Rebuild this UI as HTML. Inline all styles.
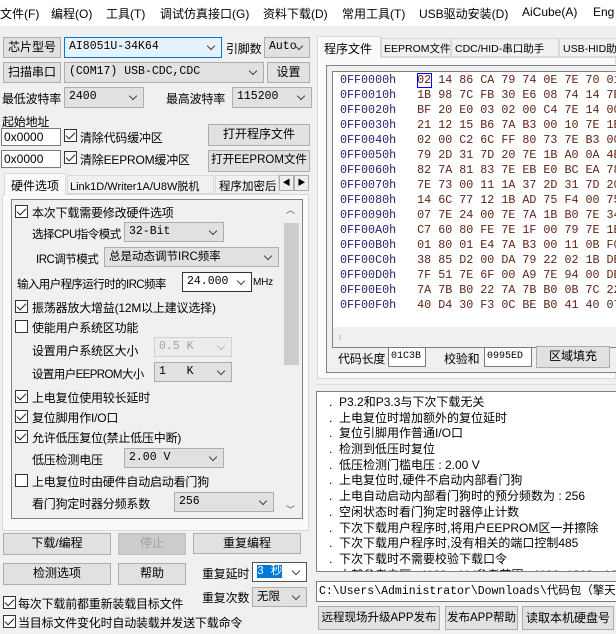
<!DOCTYPE html>
<html><head><meta charset="utf-8"><style>
*{box-sizing:border-box;margin:0;padding:0}
body{width:616px;height:634px;overflow:hidden;background:#f0f0f0;position:relative;font-family:"Liberation Sans","Noto Sans CJK SC",sans-serif;font-size:12px;color:#000}
.a{position:absolute;white-space:nowrap}
.menu{left:0;top:0;width:616px;height:26px;background:#fff}
.menu span{position:absolute;top:5px;font-size:12px}
.btn{position:absolute;background:#e1e1e1;border:1px solid #adadad;text-align:center;line-height:19px;font-size:12px;white-space:nowrap;overflow:hidden}
.cb{position:absolute;background:#e1e1e1;border:1px solid #adadad;font-family:"Liberation Mono","Noto Sans CJK SC",monospace;font-size:11.5px;padding-left:4px;line-height:18px;white-space:nowrap;overflow:hidden}
.cb:after{content:"";position:absolute;right:7px;top:5px;width:5px;height:5px;border-right:1px solid #444;border-bottom:1px solid #444;transform:rotate(45deg)}
.cbw{background:#fff;border-color:#7a7a7a}
.dis{color:#a0a0a0;background:#ececec;border-color:#d0d0d0}
.dis:after{border-color:#bbb}
.chk{position:absolute;width:13px;height:13px;border:1px solid #333;background:#fff}
.chk.on:after{content:"";position:absolute;left:3px;top:0px;width:4px;height:8px;border-right:1.5px solid #222;border-bottom:1.5px solid #222;transform:rotate(45deg)}
.lbl{position:absolute;white-space:nowrap;font-size:12px;letter-spacing:-0.2px}
.inp{position:absolute;background:#fff;border:1px solid #7a7a7a;font-family:"Liberation Sans",sans-serif;font-size:12px;padding-left:2px;line-height:16px}
.hex{position:absolute;font-family:"Liberation Mono",monospace;font-size:11.7px}
.hex div{white-space:pre;height:15px;line-height:15px}
.hex .ad{color:#23236e}
.hex .b{color:#5e2416}
.log div{height:15.7px;line-height:15.7px;font-size:12px;white-space:nowrap}
</style></head><body>
<div class="a menu">
<span style="left:0">文件(F)</span><span style="left:51px">编程(O)</span><span style="left:106px">工具(T)</span><span style="left:160px">调试仿真接口(G)</span><span style="left:263px">资料下载(D)</span><span style="left:342px">常用工具(T)</span><span style="left:419px">USB驱动安装(D)</span><span style="left:522px">AiCube(A)</span><span style="left:593px">Eng</span>
</div>

<div class="btn" style="left:3px;top:37px;width:58px;height:21px">芯片型号</div>
<div class="cb cbw" style="left:64px;top:37px;width:158px;height:21px;border-color:#0078d7;background:#e5f1fb">AI8051U-34K64</div>
<div class="lbl" style="left:226px;top:40px">引脚数</div>
<div class="cb" style="left:264px;top:37px;width:46px;height:21px">Auto</div>

<div class="btn" style="left:3px;top:62px;width:58px;height:21px">扫描串口</div>
<div class="cb" style="left:64px;top:62px;width:200px;height:21px">(COM17) USB-CDC,CDC</div>
<div class="btn" style="left:267px;top:62px;width:43px;height:21px">设置</div>

<div class="lbl" style="left:2px;top:90px">最低波特率</div>
<div class="cb" style="left:64px;top:87px;width:80px;height:21px">2400</div>
<div class="lbl" style="left:166px;top:90px">最高波特率</div>
<div class="cb" style="left:232px;top:87px;width:80px;height:21px">115200</div>

<div class="lbl" style="left:2px;top:113px">起始地址</div>
<div class="inp" style="left:1px;top:128px;width:60px;height:18px">0x0000</div>
<div class="chk on" style="left:64px;top:129px"></div>
<div class="lbl" style="left:80px;top:129px">清除代码缓冲区</div>
<div class="btn" style="left:208px;top:124px;width:102px;height:22px">打开程序文件</div>
<div class="inp" style="left:1px;top:150px;width:60px;height:18px">0x0000</div>
<div class="chk on" style="left:64px;top:151px"></div>
<div class="lbl" style="left:80px;top:151px">清除EEPROM缓冲区</div>
<div class="btn" style="left:208px;top:150px;width:102px;height:22px;font-size:11.5px">打开EEPROM文件</div>

<div class="a" style="left:2px;top:194px;width:307px;height:337px;background:#fafafa;border:1px solid #d9d9d9"></div>
<div class="a" style="left:4px;top:173px;width:62px;height:22px;background:#fafafa;border:1px solid #d9d9d9;border-bottom:none;padding:3px 6px;font-size:12px">硬件选项</div>
<div class="a" style="left:67px;top:175px;width:147px;height:19px;border:1px solid #d9d9d9;padding:2px 2px;font-size:11px">Link1D/Writer1A/U8W脱机</div>
<div class="a" style="left:215px;top:175px;width:64px;height:19px;border:1px solid #d9d9d9;padding:2px 3px;font-size:11.5px;overflow:hidden">程序加密后</div>
<div class="a" style="left:279px;top:175px;width:15px;height:16px;border:1px solid #adadad;background:#eee;font-size:8px;text-align:center;line-height:14px">◀</div>
<div class="a" style="left:294px;top:175px;width:15px;height:16px;border:1px solid #adadad;background:#eee;font-size:8px;text-align:center;line-height:14px">▶</div>

<div class="a" style="left:11px;top:199px;width:292px;height:320px;border:1px solid #828282;background:#f0f0f0"></div>
<div class="a" style="left:283px;top:200px;width:17px;height:318px;background:#f0f0f0"></div>
<div class="a" style="left:284px;top:223px;width:15px;height:142px;background:#cdcdcd"></div>
<div class="a" style="left:286px;top:203px;font-size:9px;color:#555">︿</div>
<div class="a" style="left:286px;top:503px;font-size:9px;color:#555">﹀</div>

<div class="chk on" style="left:15px;top:205px"></div><div class="lbl" style="left:32px;top:204px">本次下载需要修改硬件选项</div>
<div class="lbl" style="left:32px;top:226px;font-size:11.5px;letter-spacing:-0.5px">选择CPU指令模式</div>
<div class="cb" style="left:124px;top:222px;width:100px;height:20px">32-Bit</div>
<div class="lbl" style="left:36px;top:251px;font-size:11.5px;letter-spacing:-0.5px">IRC调节模式</div>
<div class="cb" style="left:104px;top:247px;width:175px;height:20px;font-family:'Liberation Sans','Noto Sans CJK SC',sans-serif">总是动态调节IRC频率</div>
<div class="lbl" style="left:17px;top:276px;font-size:11.5px;letter-spacing:-0.6px">输入用户程序运行时的IRC频率</div>
<div class="cb cbw" style="left:182px;top:272px;width:70px;height:20px;border-color:#333">24.000</div>
<div class="lbl" style="left:253px;top:277px;font-size:10px">MHz</div>
<div class="chk on" style="left:15px;top:300px"></div><div class="lbl" style="left:32px;top:299px">振荡器放大增益(12M以上建议选择)</div>
<div class="chk" style="left:15px;top:320px"></div><div class="lbl" style="left:32px;top:319px">使能用户系统区功能</div>
<div class="lbl" style="left:32px;top:342px">设置用户系统区大小</div>
<div class="cb dis" style="left:154px;top:337px;width:78px;height:20px">0.5 K</div>
<div class="lbl" style="left:32px;top:366px;font-size:11.5px;letter-spacing:-0.6px">设置用户EEPROM大小</div>
<div class="cb" style="left:154px;top:362px;width:78px;height:20px">1&nbsp;&nbsp;&nbsp;K</div>
<div class="chk on" style="left:15px;top:390px"></div><div class="lbl" style="left:32px;top:389px">上电复位使用较长延时</div>
<div class="chk on" style="left:15px;top:410px"></div><div class="lbl" style="left:32px;top:409px">复位脚用作I/O口</div>
<div class="chk on" style="left:15px;top:430px"></div><div class="lbl" style="left:32px;top:429px">允许低压复位(禁止低压中断)</div>
<div class="lbl" style="left:32px;top:451px">低压检测电压</div>
<div class="cb" style="left:124px;top:448px;width:100px;height:20px">2.00 V</div>
<div class="chk" style="left:15px;top:474px"></div><div class="lbl" style="left:32px;top:473px">上电复位时由硬件自动启动看门狗</div>
<div class="lbl" style="left:32px;top:495px">看门狗定时器分频系数</div>
<div class="cb" style="left:174px;top:492px;width:100px;height:20px">256</div>

<div class="btn" style="left:3px;top:533px;width:108px;height:22px">下载/编程</div>
<div class="btn" style="left:118px;top:533px;width:68px;height:22px;color:#a0a0a0;background:#ccc;border-color:#bfbfbf">停止</div>
<div class="btn" style="left:193px;top:533px;width:108px;height:21px">重复编程</div>
<div class="btn" style="left:3px;top:563px;width:108px;height:22px">检测选项</div>
<div class="btn" style="left:118px;top:563px;width:68px;height:22px">帮助</div>
<div class="lbl" style="left:202px;top:565px">重复延时</div>
<div class="cb cbw" style="left:252px;top:562px;width:55px;height:20px;border-color:#555"><span style="background:#0078d7;color:#fff">3 秒</span></div>
<div class="lbl" style="left:202px;top:589px">重复次数</div>
<div class="cb" style="left:252px;top:587px;width:55px;height:20px;font-family:'Liberation Sans','Noto Sans CJK SC',sans-serif">无限</div>
<div class="chk on" style="left:3px;top:596px"></div><div class="lbl" style="left:18px;top:595px">每次下载前都重新装载目标文件</div>
<div class="chk on" style="left:3px;top:615px"></div><div class="lbl" style="left:18px;top:614px">当目标文件变化时自动装载并发送下载命令</div>

<div class="a" style="left:317px;top:57px;width:299px;height:322px;background:#fafafa;border:1px solid #d9d9d9"></div>
<div class="a" style="left:317px;top:36px;width:64px;height:22px;background:#fafafa;border:1px solid #d9d9d9;border-bottom:none;padding:3px 6px;font-size:12px">程序文件</div>
<div class="a" style="left:381px;top:38px;width:70px;height:19px;border:1px solid #d9d9d9;padding:2px 2px;font-size:10.5px;overflow:hidden">EEPROM文件</div>
<div class="a" style="left:451px;top:38px;width:108px;height:19px;border:1px solid #d9d9d9;padding:2px 3px;font-size:10.5px;overflow:hidden">CDC/HID-串口助手</div>
<div class="a" style="left:559px;top:38px;width:60px;height:19px;border:1px solid #d9d9d9;padding:2px 3px;font-size:10.5px;overflow:hidden">USB-HID助手</div>
<div class="a" style="left:326px;top:65px;width:292px;height:308px;border:1px solid #828282;background:#f0f0f0"></div>
<div class="a" style="left:332px;top:71px;width:286px;height:277px;border:1px solid #828282;background:#fff"></div>
<div class="a" style="left:333px;top:327px;width:283px;height:20px;background:#f0f0f0"></div>
<div class="a" style="left:338px;top:329px;color:#bbb;font-size:13px">‹</div>

<div class="a" style="left:333px;top:72px;width:283px;height:255px;overflow:hidden">
<div class="hex" style="left:7px;top:1px">
<div><span class="ad">0FF0000h</span>   <span class="b">02 14 86 CA 79 74 0E 7E 70 01</span></div>
<div><span class="ad">0FF0010h</span>   <span class="b">1B 98 7C FB 30 E6 08 74 14 7E</span></div>
<div><span class="ad">0FF0020h</span>   <span class="b">BF 20 E0 03 02 00 C4 7E 14 00</span></div>
<div><span class="ad">0FF0030h</span>   <span class="b">21 12 15 B6 7A B3 00 10 7E 1E</span></div>
<div><span class="ad">0FF0040h</span>   <span class="b">02 00 C2 6C FF 80 73 7E B3 00</span></div>
<div><span class="ad">0FF0050h</span>   <span class="b">79 2D 31 7D 20 7E 1B A0 0A 4E</span></div>
<div><span class="ad">0FF0060h</span>   <span class="b">82 7A 81 83 7E EB E0 BC EA 78</span></div>
<div><span class="ad">0FF0070h</span>   <span class="b">7E 73 00 11 1A 37 2D 31 7D 20</span></div>
<div><span class="ad">0FF0080h</span>   <span class="b">14 6C 77 12 1B AD 75 F4 00 75</span></div>
<div><span class="ad">0FF0090h</span>   <span class="b">07 7E 24 00 7E 7A 1B B0 7E 34</span></div>
<div><span class="ad">0FF00A0h</span>   <span class="b">C7 60 80 FE 7E 1F 00 79 7E 1E</span></div>
<div><span class="ad">0FF00B0h</span>   <span class="b">01 80 01 E4 7A B3 00 11 0B F0</span></div>
<div><span class="ad">0FF00C0h</span>   <span class="b">38 85 D2 00 DA 79 22 02 1B DE</span></div>
<div><span class="ad">0FF00D0h</span>   <span class="b">7F 51 7E 6F 00 A9 7E 94 00 DE</span></div>
<div><span class="ad">0FF00E0h</span>   <span class="b">7A 7B B0 22 7A 7B B0 0B 7C 22</span></div>
<div><span class="ad">0FF00F0h</span>   <span class="b">40 D4 30 F3 0C BE B0 41 40 07</span></div>
</div>
<div style="position:absolute;left:84px;top:1px;width:15px;height:15px;border:1px solid #0000ff"></div>
</div>

<div class="lbl" style="left:338px;top:350px">代码长度</div>
<div class="inp" style="left:388px;top:347px;width:38px;height:20px;font-family:'Liberation Mono';font-size:10px;line-height:18px">01C3B</div>
<div class="lbl" style="left:444px;top:350px">校验和</div>
<div class="inp" style="left:484px;top:347px;width:48px;height:20px;font-family:'Liberation Mono';font-size:10px;line-height:18px">0995ED</div>
<div class="btn" style="left:536px;top:346px;width:74px;height:22px">区域填充</div>

<div class="a" style="left:316px;top:384px;width:300px;height:1px;background:#cfe3f3"></div>
<div class="a log" style="left:316px;top:391px;width:302px;height:181px;background:#fff;border:1px solid #828282;overflow:hidden;padding:3px 0 0 12px">
<div>.&nbsp;&nbsp;P3.2和P3.3与下次下载无关</div>
<div>.&nbsp;&nbsp;上电复位时增加额外的复位延时</div>
<div>.&nbsp;&nbsp;复位引脚用作普通I/O口</div>
<div>.&nbsp;&nbsp;检测到低压时复位</div>
<div>.&nbsp;&nbsp;低压检测门槛电压 : 2.00 V</div>
<div>.&nbsp;&nbsp;上电复位时,硬件不启动内部看门狗</div>
<div>.&nbsp;&nbsp;上电自动启动内部看门狗时的预分频数为 : 256</div>
<div>.&nbsp;&nbsp;空闲状态时看门狗定时器停止计数</div>
<div>.&nbsp;&nbsp;下次下载用户程序时,将用户EEPROM区一并擦除</div>
<div>.&nbsp;&nbsp;下次下载用户程序时,没有相关的端口控制485</div>
<div>.&nbsp;&nbsp;下次下载时不需要校验下载口令</div>
<div>.&nbsp;&nbsp;内部参考电压 : 1190 mV (参考范围 : 1100~1300 mV)</div>
</div>
<div class="inp" style="left:316px;top:581px;width:302px;height:21px;font-family:'Liberation Mono','Noto Sans CJK SC',monospace;font-size:11.5px;line-height:19px;overflow:hidden;white-space:nowrap">C:\Users\Administrator\Downloads\代码包（擎天柱版</div>
<div class="btn" style="left:318px;top:606px;width:122px;height:24px;line-height:22px;font-size:11.5px">远程现场升级APP发布</div>
<div class="btn" style="left:445px;top:606px;width:73px;height:24px;line-height:22px;font-size:11.5px">发布APP帮助</div>
<div class="btn" style="left:522px;top:606px;width:92px;height:24px;line-height:22px">读取本机硬盘号</div>
</body></html>
